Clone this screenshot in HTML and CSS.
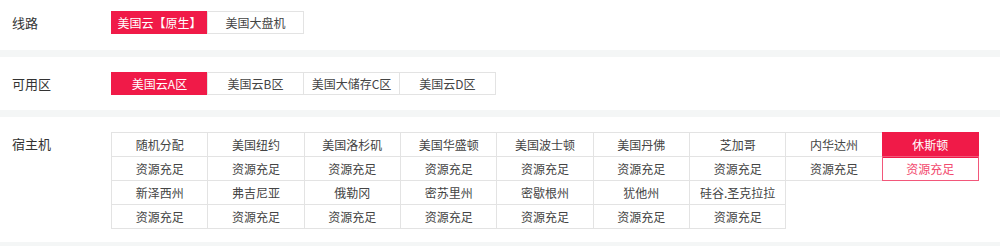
FILE: index.html
```html
<!DOCTYPE html>
<html lang="zh-CN">
<head>
    <meta charset="UTF-8">
    <meta name="viewport" content="width=device-width, initial-scale=1.0">
    <title>选择主机</title>
    <link rel="stylesheet" href="styles.css">
</head>
<body>
    <div class="section first">
        <div class="label">线路</div>
        <div class="btn-group">
            <div class="btn active">美国云【原生】</div>
            <div class="btn">美国大盘机</div>
        </div>
    </div>

    <div class="section zone">
        <div class="label">可用区</div>
        <div class="btn-group">
            <div class="btn active">美国云A区</div>
            <div class="btn">美国云B区</div>
            <div class="btn">美国大储存C区</div>
            <div class="btn">美国云D区</div>
        </div>
    </div>

    <div class="section hosts">
        <div class="label">宿主机</div>
        <div class="host-grid">
            <div class="host"><div class="name">随机分配</div><div class="status">资源充足</div></div>
            <div class="host"><div class="name">美国纽约</div><div class="status">资源充足</div></div>
            <div class="host"><div class="name">美国洛杉矶</div><div class="status">资源充足</div></div>
            <div class="host"><div class="name">美国华盛顿</div><div class="status">资源充足</div></div>
            <div class="host"><div class="name">美国波士顿</div><div class="status">资源充足</div></div>
            <div class="host"><div class="name">美国丹佛</div><div class="status">资源充足</div></div>
            <div class="host"><div class="name">芝加哥</div><div class="status">资源充足</div></div>
            <div class="host"><div class="name">内华达州</div><div class="status">资源充足</div></div>
            <div class="host selected"><div class="name">休斯顿</div><div class="status">资源充足</div></div>
            <div class="host"><div class="name">新泽西州</div><div class="status">资源充足</div></div>
            <div class="host"><div class="name">弗吉尼亚</div><div class="status">资源充足</div></div>
            <div class="host"><div class="name">俄勒冈</div><div class="status">资源充足</div></div>
            <div class="host"><div class="name">密苏里州</div><div class="status">资源充足</div></div>
            <div class="host"><div class="name">密歇根州</div><div class="status">资源充足</div></div>
            <div class="host"><div class="name">犹他州</div><div class="status">资源充足</div></div>
            <div class="host"><div class="name">硅谷.圣克拉拉</div><div class="status">资源充足</div></div>
        </div>
    </div>
</body>
</html>
```

FILE: styles.css
```css
body {
    margin: 0;
    background-color: #f4f6f6;
    color: #333;
    font-family: "Microsoft YaHei", "Noto Sans CJK SC", "Noto Sans", sans-serif;
    font-size: 12px;
}

/* Option rows */
.section {
    display: flex;
    align-items: flex-start;
    background-color: #fff;
    padding: 15px 0 15px 12px;
}

.section.first {
    padding: 11px 0 16px 12px;
}

.section.zone {
    margin-top: 7px;
}

.section.hosts {
    margin-top: 7px;
    padding-bottom: 13px;
}

.label {
    width: 99px;
    font-size: 13px;
    line-height: 23px;
    color: #333;
}

.hosts .label {
    line-height: 24px;
}

/* Button groups */
.btn-group {
    display: flex;
}

.btn {
    box-sizing: border-box;
    width: 97px;
    height: 23px;
    line-height: 21px;
    text-align: center;
    border: 1px solid #e3e3e3;
    color: #444;
    background-color: #fff;
    cursor: pointer;
}

.btn + .btn {
    margin-left: -1px;
}

.btn.active {
    background-color: #f01a48;
    border-color: #f01a48;
    color: #fff;
}

/* Host table */
.host-grid {
    display: grid;
    grid-template-columns: repeat(9, 96.33px);
    border-top: 1px solid #e3e3e3;
    border-left: 1px solid #e3e3e3;
}

.host {
    border-right: 1px solid #e3e3e3;
    border-bottom: 1px solid #e3e3e3;
    text-align: center;
    color: #444;
    cursor: pointer;
}

.host .name {
    height: 23px;
    line-height: 23px;
    border-bottom: 1px solid #e3e3e3;
}

.host .status {
    height: 23px;
    line-height: 23px;
}

.host.selected .name {
    background-color: #f01a48;
    box-shadow: 0 0 0 1px #f01a48;
    border-bottom-color: #f01a48;
    color: #fff;
}

.host.selected .status {
    box-shadow: 0 0 0 1px #f2577a;
    color: #f2496e;
}
```
